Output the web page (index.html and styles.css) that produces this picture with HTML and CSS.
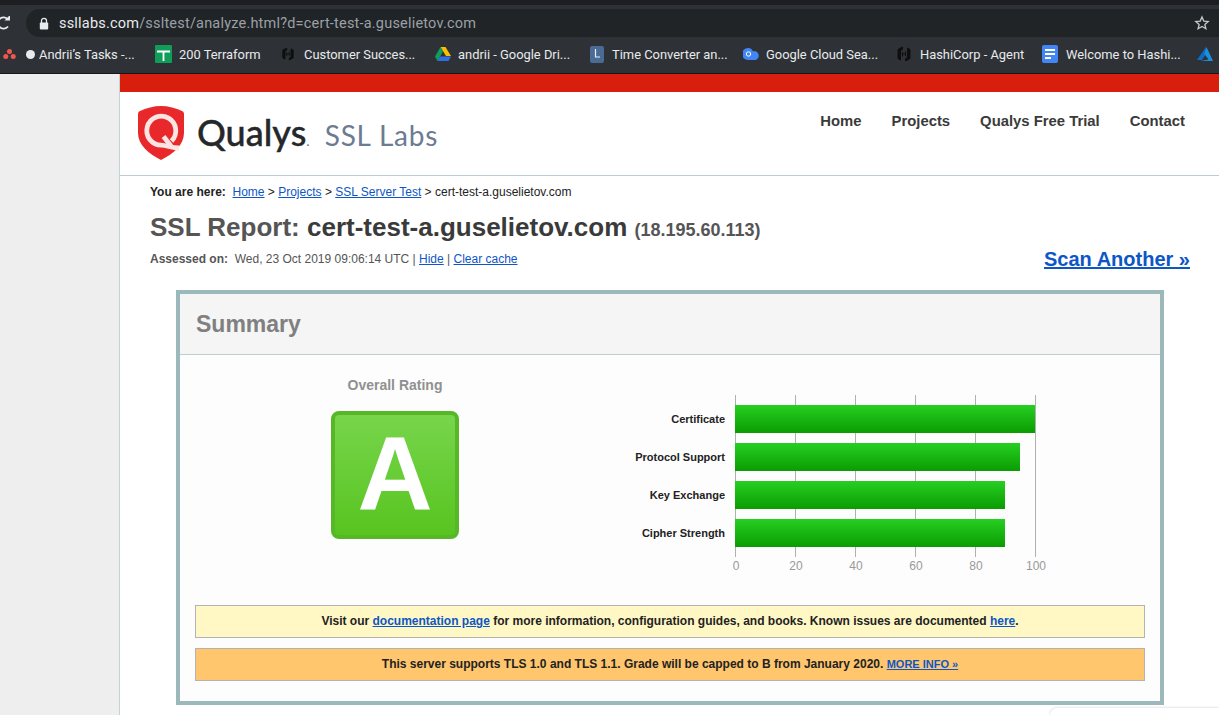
FILE: index.html
```html
<!DOCTYPE html>
<html lang="en">
<head>
    <meta charset="UTF-8" />
    <title>SSL Report: cert-test-a.guselietov.com</title>
    <link rel="stylesheet" href="styles.css">
</head>
<body>
    <!-- browser toolbar -->
    <div class="toolbar">
        <svg class="reload" width="12" height="14" viewBox="0 0 12 14"><path d="M10 3.500A5.600 5.600 0 1 0 10 10.500" fill="none" stroke="#e8eaed" stroke-width="1.800"/><path d="M6.500 4.500H12V-1z" fill="#e8eaed"/></svg>
        <div class="address">
            <svg class="lock" width="10" height="13" viewBox="0 0 10 13"><path d="M2.500 6V3.800a2.500 2.500 0 0 1 5 0V6" fill="none" stroke="#e8eaed" stroke-width="1.300"/><rect x="0.800" y="5.500" width="8.400" height="7" rx="1" fill="#e8eaed"/></svg>
            <span class="url"><span class="url-host">ssllabs.com</span>/ssltest/analyze.html?d=cert-test-a.guselietov.com</span>
            <svg class="star" width="16" height="16" viewBox="0 0 24 24"><path d="M12 3l2.700 6.100 6.600.6-5 4.400 1.500 6.500L12 17.200 6.200 20.600l1.500-6.500-5-4.400 6.600-.6z" fill="none" stroke="#c4c7ca" stroke-width="2"/></svg>
        </div>
    </div>
    <div class="bookmarks">
        <div class="bookmark b-asana">
            <svg class="asana-icon" width="13" height="12" viewBox="0 0 15 13"><circle cx="7.500" cy="3.500" r="2.900" fill="#f0574f"/><circle cx="3.200" cy="9.500" r="2.900" fill="#f0574f"/><circle cx="11.800" cy="9.500" r="2.900" fill="#f0574f"/></svg>
            <span class="dot"></span>
            <span>Andrii’s Tasks -...</span>
        </div>
        <div class="bookmark b-sheet">
            <svg width="17" height="18" viewBox="0 0 17 18"><rect width="17" height="18" rx="1" fill="#0f9d58"/><path d="M2 6.500h13M8.500 6.500V16" stroke="#fff" stroke-width="1.800"/></svg>
            <span>200 Terraform</span>
        </div>
        <div class="bookmark b-customer">
            <svg width="12" height="14" viewBox="0 0 14 16"><path d="M5.500 1L1 3.500v9l2.500 1.500V4.500l2-1.200zM8.500 15l4.500-2.500v-9L10.500 2v9.500l-2 1.200zM5.500 6v4.500M8.500 5.500V10M5.500 8h3" fill="#0e0e0e" stroke="#0e0e0e" stroke-width="1"/></svg>
            <span>Customer Succes...</span>
        </div>
        <div class="bookmark b-drive">
            <svg width="16" height="14" viewBox="0 0 16 14"><path d="M5.500 0h5l5.500 9h-5z" fill="#fbbc04"/><path d="M5.500 0L0 9.500 2.500 14l5.500-9.500z" fill="#0f9d58"/><path d="M2.500 14h11l2.500-4.500H5z" fill="#2f6fe0"/></svg>
            <span>andrii - Google Dri...</span>
        </div>
        <div class="bookmark b-time">
            <svg width="14" height="17" viewBox="0 0 14 17"><rect width="14" height="17" rx="2" fill="#4a6b94"/><path d="M5.500 3v8H10" fill="none" stroke="#e8eef5" stroke-width="1.200"/></svg>
            <span>Time Converter an...</span>
        </div>
        <div class="bookmark b-cloud">
            <svg width="16" height="12" viewBox="0 0 16 12"><path d="M5 0a5 5 0 0 1 4.800 3.200A3.500 3.500 0 0 1 12.500 12H5A6 6 0 0 1 5 0z" fill="#4285f4"/><circle cx="5.500" cy="6" r="2.200" fill="none" stroke="#fff"/></svg>
            <span>Google Cloud Sea...</span>
        </div>
        <div class="bookmark b-hashi">
            <svg width="14" height="16" viewBox="0 0 14 16"><path d="M5.500 1L1 3.500v9l2.500 1.500V4.500l2-1.200zM8.500 15l4.500-2.500v-9L10.500 2v9.500l-2 1.200zM5.500 6v4.500M8.500 5.500V10M5.500 8h3" fill="#0e0e0e" stroke="#0e0e0e" stroke-width="1"/></svg>
            <span>HashiCorp - Agent</span>
        </div>
        <div class="bookmark b-docs">
            <svg width="16" height="18" viewBox="0 0 16 18"><rect width="16" height="18" rx="2" fill="#4285f4"/><path d="M3 5h10M3 9h10M3 13h6" stroke="#fff" stroke-width="1.800"/></svg>
            <span>Welcome to Hashi...</span>
        </div>
        <div class="bookmark b-azure">
            <svg width="16" height="14" viewBox="0 0 16 14"><path d="M9 0L0 13h5L9 7z" fill="#0a6fc2"/><path d="M9.500 0L16 14H3.500l8-1.500L7.500 7z" fill="#1a8fe0"/></svg>
        </div>
    </div>

    <div class="layout">
        <div class="sidebar"></div>
        <div class="page">
            <div class="redbar"></div>
            <header class="site-header">
                <div class="logo">
                    <svg class="shield" width="46" height="54" viewBox="0 0 46 54">
                        <path d="M23 0C30 0 38 2 44 5C46 6 46 7 46 9V27C46 39 35 48 23 54C11 48 0 39 0 27V9C0 7 0 6 2 5C8 2 16 0 23 0z" fill="#e8282b"/>
                        <path d="M33.500 35A14.500 14.500 0 1 0 23.300 39.200C29 39.500 34 42 41 42" fill="none" stroke="#fbe4e1" stroke-width="4.800"/>
                        <path d="M25.500 30.500L33 40" fill="none" stroke="#fbe4e1" stroke-width="4.800"/>
                    </svg>
                    <span class="logo-name">Qualys<span class="logo-dot">.</span></span>
                    <span class="logo-product">SSL Labs</span>
                </div>
                <nav class="site-nav">
                    <a>Home</a>
                    <a>Projects</a>
                    <a>Qualys Free Trial</a>
                    <a>Contact</a>
                </nav>
            </header>
            <main class="report">
                <p class="crumbs"><b>You are here:</b>&nbsp; <a href="#">Home</a> &gt; <a href="#">Projects</a> &gt; <a href="#">SSL Server Test</a> &gt; cert-test-a.guselietov.com</p>
                <h1 class="report-title">SSL Report: <span class="host">cert-test-a.guselietov.com</span> <span class="ip">(18.195.60.113)</span></h1>
                <div class="assessed-row">
                    <p class="assessed"><b>Assessed on:</b>&nbsp; Wed, 23 Oct 2019 09:06:14 UTC | <a href="#">Hide</a> | <a href="#">Clear cache</a></p>
                    <a class="scan-another" href="#">Scan Another »</a>
                </div>

                <section class="summary">
                    <h2 class="summary-title">Summary</h2>
                    <div class="summary-body">
                        <div class="rating-row">
                            <div class="rating">
                                <div class="rating-label">Overall Rating</div>
                                <div class="grade">A</div>
                            </div>
                            <div class="chart">
                                <div class="chart-labels">
                                    <div>Certificate</div>
                                    <div>Protocol Support</div>
                                    <div>Key Exchange</div>
                                    <div>Cipher Strength</div>
                                </div>
                                <div class="chart-main">
                                    <div class="plot">
                                        <div class="bar" style="width: 300px"></div>
                                        <div class="bar" style="width: 285px"></div>
                                        <div class="bar" style="width: 270px"></div>
                                        <div class="bar" style="width: 270px"></div>
                                    </div>
                                    <div class="ticks">
                                        <span>0</span><span>20</span><span>40</span><span>60</span><span>80</span><span>100</span>
                                    </div>
                                </div>
                            </div>
                        </div>
                        <div class="notice notice-info">Visit our <a href="#">documentation page</a> for more information, configuration guides, and books. Known issues are documented <a href="#">here</a>.</div>
                        <div class="notice notice-warn">This server supports TLS 1.0 and TLS 1.1. Grade will be capped to B from January 2020. <a class="more" href="#">MORE INFO »</a></div>
                    </div>
                </section>
            </main>
        </div>
    </div>
    <div class="corner-popup"></div>
</body>
</html>
```

FILE: styles.css
```css
html, body {
    margin: 0;
    height: 715px;
    overflow: hidden;
}
body {
    background: #fff;
    color: #333;
    font-family: "Liberation Sans", Arial, sans-serif;
    position: relative;
}
a {
    color: #0d56c6;
}

/* browser chrome */
.toolbar {
    height: 28px;
    padding: 4px 0 0 0;
    background: #2e3236;
    border-top: 5px solid #1c1e22;
    display: flex;
    align-items: flex-start;
}
.reload {
    margin: 7px 0 0 -2px;
    flex: none;
}
.address {
    margin-left: 16px;
    flex: 1;
    height: 28px;
    background: #202427;
    border-radius: 14px 0 0 14px;
    display: flex;
    align-items: center;
}
.lock {
    margin-left: 13px;
    flex: none;
}
.url {
    margin-left: 10px;
    font-family: Roboto, sans-serif;
    font-size: 14.500px;
    letter-spacing: 0.2px;
    color: #9aa0a6;
    flex: 1;
}
.url-host {
    color: #e8eaed;
}
.star {
    margin-right: 9px;
}
.bookmarks {
    height: 34px;
    padding-bottom: 2px;
    background: #2e3236;
    border-bottom: 1px solid #17181a;
    display: flex;
    align-items: center;
    font-family: Roboto, sans-serif;
    font-size: 12.900px;
    color: #e8eaed;
    white-space: nowrap;
}
.bookmark {
    display: flex;
    align-items: center;
    flex: none;
    gap: 7px;
}
.bookmark svg {
    flex: none;
}
.b-asana { width: 152px; margin-left: 3px; gap: 5px; }
.asana-icon { margin-right: 5px; }
.b-sheet { width: 127px; }
.b-customer { width: 153px; gap: 10px; }
.b-drive { width: 155px; }
.b-time { width: 153px; gap: 8px; }
.b-cloud { width: 154px; }
.b-hashi { width: 145px; gap: 9px; }
.b-docs { width: 155px; gap: 8px; }
.dot {
    width: 9px;
    height: 9px;
    margin-right: -1px;
    border-radius: 50%;
    background: #e8eaed;
}

/* page */
.layout {
    display: flex;
}
.sidebar {
    width: 119px;
    height: 641px;
    background: #eeeeee;
    border-right: 1px solid #c3d3d6;
    flex: none;
}
.page {
    flex: 1;
}
.redbar {
    height: 18px;
    background: #d81e0d;
}
.site-header {
    height: 83px;
    border-bottom: 1px solid #b9ced2;
    display: flex;
    justify-content: space-between;
}
.logo {
    display: flex;
    align-items: baseline;
    margin-left: 18px;
    height: 70px;
}
.shield {
    align-self: flex-start;
    margin-top: 14px;
    flex: none;
}
.logo-name {
    margin-left: 13px;
    font-family: Lato, sans-serif;
    font-weight: 500;
    font-size: 36px;
    line-height: 80px;
    color: #25282a;
    -webkit-text-stroke: 0.4px #25282a;
}
.logo-dot {
    font-size: 14px;
    color: #777;
    -webkit-text-stroke: 0;
}
.logo-product {
    margin-left: 15px;
    font-family: Lato, sans-serif;
    font-size: 28px;
    letter-spacing: 0.8px;
    color: #6b7b92;
}
.site-nav {
    display: flex;
    gap: 30px;
    margin: 21px 34px 0 0;
    font-size: 14.850px;
    font-weight: bold;
}
.site-nav a {
    color: #3a3a3a;
}

.report {
    padding: 9px 29px 0 30px;
}
.crumbs {
    margin: 0;
    font-size: 12px;
    line-height: 14px;
    color: #222;
}
.report-title {
    margin: 13px 0 0;
    font-size: 26px;
    line-height: 30px;
    color: #555;
}
.host {
    color: #3a3a3a;
}
.ip {
    font-size: 18px;
}
.assessed-row {
    display: flex;
    justify-content: space-between;
    align-items: flex-start;
    margin-top: 6px;
}
.assessed {
    margin: 1px 0 0;
    font-size: 12px;
    line-height: 14px;
    color: #555;
}
.scan-another {
    margin-top: -4px;
    margin-bottom: -1px;
    font-size: 20px;
    font-weight: bold;
    line-height: 24px;
}

.summary {
    width: 980px;
    margin: 20px 0 0 26px;
    border: 4px solid #9bb8ba;
    background: #fdfdfd;
}
.summary-title {
    margin: 0;
    height: 60px;
    padding-left: 16px;
    background: #f5f5f5;
    border-bottom: 1px solid #bfcdcf;
    font-size: 23px;
    line-height: 60px;
    color: #808080;
}
.summary-body {
    padding: 0 15px 20px;
}
.rating-row {
    display: flex;
    height: 250px;
}
.rating {
    width: 400px;
    padding-top: 22px;
    text-align: center;
    flex: none;
}
.rating-label {
    font-size: 14px;
    font-weight: bold;
    line-height: 16px;
    color: #909090;
}
.grade {
    width: 120px;
    height: 120px;
    margin: 18px auto 0;
    border: 4px solid #56b826;
    border-radius: 8px;
    background: linear-gradient(#77d54b, #58c420);
    color: #fff;
    font-size: 104px;
    font-weight: bold;
    line-height: 117px;
}
.chart {
    display: flex;
    padding-top: 40px;
}
.chart-labels {
    width: 130px;
    padding: 10px 10px 0 0;
    text-align: right;
    font-size: 11px;
    font-weight: bold;
    color: #222;
}
.chart-labels div {
    height: 38px;
    line-height: 28px;
}
.plot {
    width: 301px;
    height: 162px;
    padding-top: 10px;
    box-sizing: border-box;
    background: repeating-linear-gradient(90deg, #b0b0b0 0, #b0b0b0 1px, transparent 1px, transparent 60px);
}
.bar {
    height: 28px;
    margin-bottom: 10px;
    background: linear-gradient(#27cf22, #0a9c02);
}
.ticks {
    display: flex;
    justify-content: space-between;
    width: 300px;
    margin: 2px 0 0 1px;
    font-size: 12px;
    line-height: 14px;
    color: #999;
}
.ticks span {
    width: 0;
    display: flex;
    justify-content: center;
}
.notice {
    height: 31px;
    margin-bottom: 10px;
    border: 1px solid #b3b3b3;
    font-size: 12px;
    font-weight: bold;
    line-height: 30px;
    text-align: center;
    color: #222;
}
.notice:last-child {
    margin-bottom: 0;
}
.notice-info {
    background: #fff8c4;
}
.notice-warn {
    background: #ffc66d;
}
.more {
    font-size: 11px;
}
.corner-popup {
    position: absolute;
    left: 1050px;
    top: 708px;
    width: 169px;
    height: 7px;
    background: #fff;
    border-radius: 8px 0 0 0;
    box-shadow: 0 0 3px rgba(0, 0, 0, 0.2);
}
```
